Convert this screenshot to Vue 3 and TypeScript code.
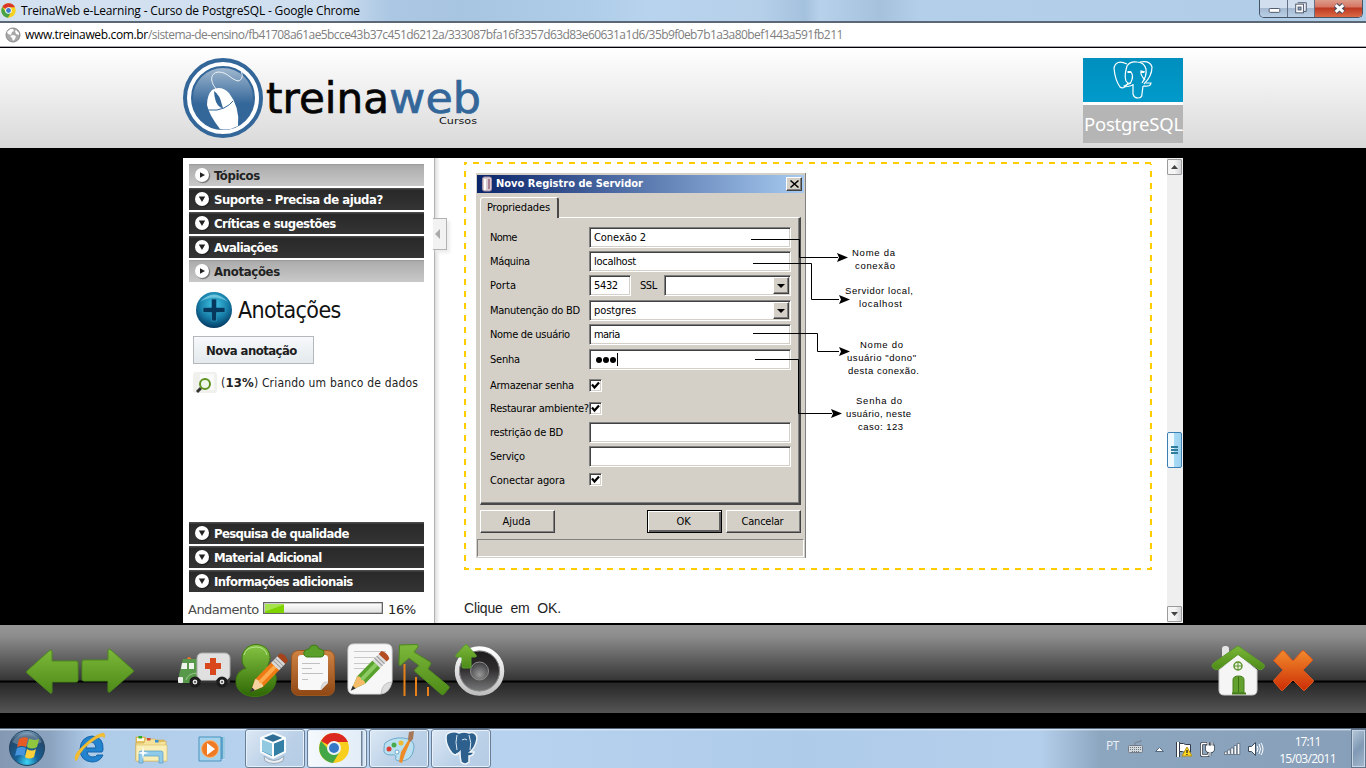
<script setup lang="ts">
import type { Directive } from 'vue'

// Spaces the letters of a label so that it fills exactly the given width.
const vFit: Directive<HTMLElement, number> = {
  mounted(el, binding) {
    const range = document.createRange()
    range.selectNodeContents(el)
    const natural = range.getBoundingClientRect().width
    const count = (el.textContent ?? '').length
    if (count > 1) el.style.letterSpacing = `${(binding.value - natural) / (count - 0.5)}px`
  },
}

interface Item { label: string; width: number; open?: boolean }

const topItems: Item[] = [
  { label: 'Tópicos', width: 46, open: true },
  { label: 'Suporte - Precisa de ajuda?', width: 169 },
  { label: 'Críticas e sugestões', width: 122 },
  { label: 'Avaliações', width: 64 },
  { label: 'Anotações', width: 66, open: true },
]
const bottomItems: Item[] = [
  { label: 'Pesquisa de qualidade', width: 135 },
  { label: 'Material Adicional', width: 108 },
  { label: 'Informações adicionais', width: 139 },
]

interface Row { label: string; width: number; kind: 'text' | 'port' | 'combo' | 'secret' | 'check'; value?: string; valueWidth?: number }

const rows: Row[] = [
  { label: 'Nome', width: 27, kind: 'text', value: 'Conexão 2', valueWidth: 52 },
  { label: 'Máquina', width: 40, kind: 'text', value: 'localhost', valueWidth: 42 },
  { label: 'Porta', width: 26, kind: 'port', value: '5432', valueWidth: 24 },
  { label: 'Manutenção do BD', width: 90, kind: 'combo', value: 'postgres', valueWidth: 42 },
  { label: 'Nome de usuário', width: 80, kind: 'text', value: 'maria', valueWidth: 26 },
  { label: 'Senha', width: 30, kind: 'secret' },
  { label: 'Armazenar senha', width: 84, kind: 'check' },
  { label: 'Restaurar ambiente?', width: 99, kind: 'check' },
  { label: 'restrição de BD', width: 73, kind: 'text', value: '', valueWidth: 0 },
  { label: 'Serviço', width: 35, kind: 'text', value: '', valueWidth: 0 },
  { label: 'Conectar agora', width: 75, kind: 'check' },
]
</script>

<template>
  <div class="screen">
    <header class="titlebar">
      <svg class="chrome-small" viewBox="0 0 46 46">
        <circle cx="23" cy="23" r="22" fill="#f4d21f" />
        <path d="M23 23 4 12A22 22 0 0 1 43 13L23 13Z" fill="#d8372a" />
        <path d="M4 12A22 22 0 0 0 21 45L31 28 14 27Z" fill="#45a248" />
        <circle cx="23" cy="23" r="10" fill="#fff" /><circle cx="23" cy="23" r="7.5" fill="#3f7fd0" />
      </svg>
      <span v-fit="339" class="title-text">TreinaWeb e-Learning - Curso de PostgreSQL - Google Chrome</span>
      <div class="win-buttons">
        <span class="wb"><svg viewBox="0 0 28 17"><rect x="9.5" y="8.5" width="11" height="4" rx="1" fill="#fff" stroke="#4c566a" /></svg></span>
        <span class="wb mid"><svg viewBox="0 0 27 17"><path d="M10 2.500h9v9h-3" fill="#e8edf4" stroke="#4c566a" /><rect x="8" y="4" width="8" height="9" fill="#fff" stroke="#4c566a" /><rect x="10.500" y="7" width="3" height="3" fill="#8fa8c8" stroke="#4c566a" /></svg></span>
        <span class="wb close"><svg viewBox="0 0 46 17"><path d="m20 5 8 7m0-7-8 7" stroke="#444c5e" stroke-width="5" /><path d="m20.200 5.200 7.600 6.600m0-6.600-7.600 6.600" stroke="#fff" stroke-width="3" /></svg></span>
      </div>
    </header>

    <div class="address">
      <svg class="globe" viewBox="0 0 16 16">
        <circle cx="8" cy="8" r="7" fill="#a8a8a8" stroke="#8a8a8a" />
        <path d="M3 4q3-3 5-2l1 2-2 1-1 3-3-1-1-2Zm5 4 3 1-1 3-2 2-1-3-2-2Zm3-5 3 3v2l-3-1-1-3Z" fill="#fff" />
      </svg>
      <span v-fit="123" class="host">www.treinaweb.com.br</span><span v-fit="695" class="path">/sistema-de-ensino/fb41708a61ae5bcce43b37c451d6212a/333087bfa16f3357d63d83e60631a1d6/35b9f0eb7b1a3a80bef1443a591fb211</span>
    </div>

    <div class="site-head">
      <div class="column head-row">
        <svg class="logo" width="300" height="82" viewBox="183 57 300 82">
          <defs>
            <linearGradient id="disc" x1="0" y1="0" x2="0" y2="1"><stop offset="0" stop-color="#a3bad0" /><stop offset=".6" stop-color="#336699" /></linearGradient>
          </defs>
          <circle cx="223" cy="98" r="38" fill="#fff" stroke="#336699" stroke-width="4" />
          <circle cx="223" cy="98" r="31" fill="url(#disc)" stroke="#336699" stroke-width="2" />
          <path d="M216 89C209 80 211 73 218 72 228 72 230 79 238 81 243 80 243 74 241 72" fill="none" stroke="#eef3f8" stroke-width="1" />
          <path d="M212 90Q221 85 229 93 240 107 238 126 229 131 220 129 209 115 207 105 207 95 212 90Z" fill="#fff" />
          <path d="M208 110Q218 111 224 108 230 105 233 101" fill="none" stroke="#336699" />
          <path d="M214 91q6 4 8 14l1 3q-4 0-7-6-2-6-2-11Z" fill="#336699" />
          <text x="266" y="112.500" font-family="'DejaVu Sans',sans-serif" font-size="43" textLength="123" lengthAdjust="spacingAndGlyphs" fill="#050505" stroke="#050505" stroke-width=".7">treina</text>
          <text x="389" y="112.500" font-family="'DejaVu Sans',sans-serif" font-size="43" textLength="92" lengthAdjust="spacingAndGlyphs" fill="#336699" stroke="#336699" stroke-width=".7">web</text>
          <text x="439" y="124" font-family="'DejaVu Sans',sans-serif" font-size="9.500" textLength="38" lengthAdjust="spacingAndGlyphs" fill="#111">Cursos</text>
        </svg>
        <div class="pg">
          <div class="pg-blue">
            <svg width="42" height="42" viewBox="83 59 42 42" fill="none" stroke="#fff" stroke-width="1.200">
              <path d="M97 64Q86 59 84 68 85 80 90 87 94 90 98 83" />
              <path d="M97 66Q94 76 96 81 99 85 101 82 104 76 101 72L97 72" />
              <path d="M97 66Q100 61 107 62 114 62 116 69 117 76 112 83" />
              <path d="M103 84V94Q104 98 108 98 112 98 112 94L113 86" />
              <path d="M110 62Q120 60 122 67 122 76 114 84" />
              <path d="M115 80Q110 75 111 71L115 72M113 86Q121 87 121 83L116 83M103 85Q95 88 94 86L101 83" />
              <path d="M98 72h3M111 72h3" stroke-width="2.200" />
            </svg>
          </div>
          <div class="pg-name"><span v-fit="99">PostgreSQL</span></div>
        </div>
      </div>
    </div>

    <main class="stage">
      <div class="column body-row">
        <aside class="side">
          <div v-for="it in topItems" :key="it.label" class="item" :class="{ light: it.open }">
            <span class="disc"><svg viewBox="0 0 14 14"><path v-if="it.open" d="M5 4.200 10 7 5 9.800Z" /><path v-else d="M3.800 4.500h6.400L7 10Z" /></svg></span>
            <span v-fit="it.width">{{ it.label }}</span>
          </div>
          <div class="notes-head">
            <svg width="38" height="38" viewBox="0 0 38 38">
              <defs><radialGradient id="orb" cx=".5" cy=".35" r=".65"><stop offset="0" stop-color="#43c6e6" /><stop offset=".6" stop-color="#167ea8" /><stop offset="1" stop-color="#043a63" /></radialGradient></defs>
              <circle cx="19" cy="19" r="18" fill="url(#orb)" />
              <path d="M5 11Q19-4 33 11 19 2 5 11" fill="#9de3f2" opacity=".6" />
              <path d="M16.500 8h5v8.500H30v5h-8.500V30h-5v-8.500H8v-5h8.500Z" fill="#06375c" stroke="#2993ba" stroke-width=".8" />
            </svg>
            <span v-fit="103">Anotações</span>
          </div>
          <div class="new-note"><span v-fit="91">Nova anotação</span></div>
          <div class="note">
            <svg width="24" height="24" viewBox="0 0 24 24"><rect x="0" y="1" width="24" height="21" rx="3" fill="#f0f0ec" /><rect x="7" y="3" width="14" height="16" fill="#fafafa" /><path d="m8 17-4 4" stroke="#333" stroke-width="3" /><circle cx="12" cy="13" r="5" fill="#eff7eb" stroke="#5f9420" stroke-width="2" /></svg>
            <span v-fit="197" class="note-text">(<b>13%</b>) Criando um banco de dados</span>
          </div>
          <div class="spacer"></div>
          <div v-for="it in bottomItems" :key="it.label" class="item">
            <span class="disc"><svg viewBox="0 0 14 14"><path d="M3.800 4.500h6.400L7 10Z" /></svg></span>
            <span v-fit="it.width">{{ it.label }}</span>
          </div>
          <div class="progress">
            <span v-fit="71" class="p-label">Andamento</span>
            <span class="track"><span class="bar"></span></span>
            <span v-fit="28" class="p-value">16%</span>
          </div>
          <div class="handle"><svg width="5" height="10" viewBox="0 0 5 10"><path d="M5 0v10L0 5Z" fill="#aaa" /></svg></div>
        </aside>

        <section class="lesson">
          <div class="dashed">
            <div class="dialog">
              <div class="d-title">
                <svg width="10" height="16" viewBox="0 0 10 16"><rect x=".5" y="1" width="9" height="14" rx="2" fill="#d9c9d3" stroke="#a892a4" /><path d="M3 3v11" stroke="#fff" stroke-width="2" /><path d="M7 3v10" stroke="#aa7d91" stroke-width="2" /></svg>
                <span v-fit="147">Novo Registro de Servidor</span>
                <span class="d-close"><svg width="9" height="8" viewBox="0 0 9 8"><path d="m.5.500 8 7m0-7-8 7" stroke="#000" stroke-width="1.600" /></svg></span>
              </div>
              <div class="tab"><span v-fit="63">Propriedades</span></div>
              <div class="pane">
                <div v-for="r in rows" :key="r.label" class="row">
                  <span class="lab"><span v-fit="r.width">{{ r.label }}</span></span>
                  <span v-if="r.kind === 'check'" class="check"><svg width="9" height="9" viewBox="0 0 9 9"><path d="m1 3.500 2.500 3L8 1.500" fill="none" stroke="#000" stroke-width="2.200" /></svg></span>
                  <template v-else-if="r.kind === 'port'">
                    <span class="field short"><span v-fit="24">{{ r.value }}</span></span>
                    <span class="ssl"><span v-fit="17">SSL</span></span>
                    <span class="field ssl-combo"><i class="drop"></i></span>
                  </template>
                  <span v-else-if="r.kind === 'secret'" class="field dots"><i></i><i></i><i></i><b></b></span>
                  <span v-else class="field"><span v-if="r.value" v-fit="r.valueWidth ?? 0">{{ r.value }}</span><i v-if="r.kind === 'combo'" class="drop"></i></span>
                </div>
              </div>
              <div class="d-buttons">
                <span class="btn"><span v-fit="28">Ajuda</span></span>
                <span class="btn default"><span v-fit="14">OK</span></span>
                <span class="btn"><span v-fit="42">Cancelar</span></span>
              </div>
              <div class="status"></div>
            </div>
            <svg class="callouts" width="200" height="210" viewBox="740 225 200 210">
              <g fill="none" stroke="#000">
                <path d="M751 239.500h48.500v18H838" />
                <path d="M753 263.500h58.500v36H839" />
                <path d="M753 333.500h64.500v18H839" />
                <path d="M755 359.500h43.500v54H832" />
              </g>
              <path d="m848 257.500-11-4.500 2 4.500-2 4.500Zm2 42-11-4.500 2 4.500-2 4.500Zm0 52-11-4.500 2 4.500-2 4.500Zm-8 62-11-4.500 2 4.500-2 4.500Z" />
              <g class="call-text">
                <text x="852" y="256" textLength="43">Nome da</text><text x="855" y="269" textLength="40">conexão</text>
                <text x="845" y="294" textLength="68">Servidor local,</text><text x="859" y="307" textLength="43">localhost</text>
                <text x="860" y="348" textLength="43">Nome do</text><text x="847" y="361" textLength="69">usuário "dono"</text><text x="848" y="374" textLength="71">desta conexão.</text>
                <text x="856" y="404" textLength="46">Senha do</text><text x="846" y="417" textLength="65">usuário, neste</text><text x="858" y="430" textLength="45">caso: 123</text>
              </g>
            </svg>
          </div>
          <p class="after"><span v-fit="97">Clique em OK.</span></p>
        </section>

        <div class="scroll">
          <span class="s-btn"><svg width="7" height="4" viewBox="0 0 7 4"><path d="M0 4 3.500 0 7 4Z" fill="#444" /></svg></span>
          <span class="thumb"><i></i><i></i><i></i></span>
          <span class="s-btn"><svg width="7" height="4" viewBox="0 0 7 4"><path d="M0 0h7L3.500 4Z" fill="#444" /></svg></span>
        </div>
      </div>
    </main>

    <nav class="toolbar">
      <svg width="0" height="0" class="defs">
        <defs>
          <linearGradient id="green" x1="0" y1="0" x2="0" y2="1"><stop offset="0" stop-color="#7cb83a" /><stop offset="1" stop-color="#4d8a17" /></linearGradient>
          <linearGradient id="deep" x1="0" y1="0" x2="0" y2="1"><stop offset="0" stop-color="#86c544" /><stop offset="1" stop-color="#2e6704" /></linearGradient>
          <linearGradient id="brown" x1="0" y1="0" x2="0" y2="1"><stop offset="0" stop-color="#cf8444" /><stop offset="1" stop-color="#8f4714" /></linearGradient>
          <linearGradient id="fire" x1="0" y1="0" x2="0" y2="1"><stop offset="0" stop-color="#f28a2c" /><stop offset="1" stop-color="#cc2e05" /></linearGradient>
          <linearGradient id="ring" x1="0" y1="0" x2="0" y2="1"><stop offset="0" stop-color="#fff" /><stop offset="1" stop-color="#bfbfbf" /></linearGradient>
          <linearGradient id="cone" x1="0" y1="0" x2="0" y2="1"><stop offset="0" stop-color="#1c191b" /><stop offset=".45" stop-color="#2e2b2d" /><stop offset="1" stop-color="#7e8081" /></linearGradient>
          <radialGradient id="cap" cx=".5" cy=".7" r=".7"><stop offset="0" stop-color="#999" /><stop offset="1" stop-color="#3a3a3c" /></radialGradient>
        </defs>
      </svg>
      <svg class="tool" viewBox="24 640 56 60"><path d="M27 671 49 651q3-2 3 1v9h24q2 0 2 2v17q0 2-2 2H52v9q0 4-3 1L27 673q-1-1 0-2Z" fill="url(#green)" stroke="#4d8a1c" /></svg>
      <svg class="tool" viewBox="80 640 56 60"><path d="M133 670 111 650q-3-2-3 1v9H84q-2 0-2 2v17q0 2 2 2h24v9q0 4 3 1l22-19q1-1 0-2Z" fill="url(#green)" stroke="#4d8a1c" /></svg>
      <svg class="tool gap" viewBox="176 640 56 60">
        <path d="M187 660q0-3 2-3t3 3Z" fill="#ef702b" />
        <path d="M183 659h15v24h-18q-2-6 0-12Z" fill="#58984a" /><path d="M182 663h5v6h-6Zm7 0h5v6h-5Z" fill="#eef5ec" /><path d="M186 680q2-7 12-7" fill="none" stroke="#9aca8e" />
        <rect x="197" y="653" width="33" height="27" rx="5" fill="#e0e0e0" stroke="#aaa" /><rect x="178" y="677" width="5" height="6" rx="1" fill="#eee" /><path d="M196 680h34v3h-34Z" fill="#333" /><path d="M201 679.500h15" stroke="#ddd" stroke-width="2" />
        <path d="M210 658h6v5h5v6h-5v6h-6v-6h-5v-6h5Z" fill="#d9481c" />
        <g fill="#e5e5e5" stroke="#1c1c1c" stroke-width="3.200"><circle cx="195" cy="682" r="4" /><circle cx="222" cy="682" r="4" /></g><g fill="#444"><circle cx="195" cy="682" r="1" /><circle cx="222" cy="682" r="1" /></g>
      </svg>
      <svg class="tool" viewBox="232 640 56 60">
        <path d="M256 644.500c8 0 14 5 14 13 0 5-3 7-2 10 7 3 9 8 8 14-2 10-11 15-21 15-11 0-19-6-19-15 0-7 4-12 10-13-3-3-4-6-4-10 0-8 6-14 14-14Z" fill="url(#deep)" stroke="#3d7910" />
        <path d="M244 655q2-8 12-8 9 0 11 8" fill="none" stroke="#b7e28c" />
        <g transform="rotate(44 264 678)"><path d="M258.500 661h11v24l-5.500 12-5.500-12Z" fill="#ef7a13" /><path d="M262 661h4v24h-4Z" fill="#ffa94d" /><path d="M258.500 685q3-3 5.500 0 3-3 5.500 0L264 697Z" fill="#f5d3a0" /><path d="m262 693 2 5 2-5Z" fill="#333" /><rect x="258.500" y="653" width="11" height="9" fill="#d8d8d8" /><path d="M258.500 656h11m-11 3h11" stroke="#999" /><path d="M258.500 653v-4q5.500-3 11 0v4Z" fill="#a5441b" /></g>
      </svg>
      <svg class="tool" viewBox="288 640 56 60">
        <rect x="291.500" y="650.500" width="43" height="45" rx="7" fill="url(#brown)" stroke="#9c571f" />
        <path d="M301 655h24q3 0 3 3v25l-7 7h-20q-3 0-3-3v-29q0-3 3-3Z" fill="#f8f8f8" /><path d="M328 682q-7-1-7 8" fill="#ddd" stroke="#bbb" stroke-width=".7" />
        <path d="M302 663.500h18m-18 5h10m-10 5h21m-21 6h6" stroke="#c0c0c0" />
        <path d="M307 657q-4-1-3-5 1-3 5-3 1-4 5-4t5 4q5 0 5 4 0 4-3 4Z" fill="#599f2a" stroke="#3f7b15" />
      </svg>
      <svg class="tool" viewBox="344 640 56 60">
        <path d="M354 644h32q6 0 6 6v32q-4 12-12 12h-26q-6 0-6-6v-38q0-6 6-6Z" fill="#f7f7f7" stroke="#ddd" /><path d="M392 682q-10 0-11 12 9-1 11-12Z" fill="#ddd" stroke="#aaa" stroke-width=".6" />
        <path d="M354 651.500h32m-32 6h29m-29 6h16m-16 5h12" stroke="#c9c9c9" />
        <g transform="rotate(44 366 675)"><path d="M360.500 660h11v22l-5.500 14-5.500-14Z" fill="#58a12c" /><path d="M364 660h4v22h-4Z" fill="#8ccb63" /><path d="M360.500 682q3-3 5.500 0 3-3 5.500 0L366 696Z" fill="#f7bc69" /><path d="m364 692 2 5 2-5Z" fill="#333" /><rect x="360.500" y="651" width="11" height="9" fill="#ddd" /><path d="M360.500 654h11m-11 3h11" stroke="#999" /><path d="M360.500 651v-4q5.500-3 11 0v4Z" fill="#b34d20" /></g>
      </svg>
      <svg class="tool" viewBox="400 640 56 60">
        <path d="M404.500 664v32m11.500-19v19m12-9v9" stroke="#e9811b" stroke-width="2" />
        <path d="M399.500 645 417 644.500Q418.500 645 418 647L414 652 430 662Q431.500 663 430.500 664.500L428 669 448.500 686Q449.500 687 449 688L443.500 694.500Q442.500 695 441.500 694.500L415 671.500Q414 670 415.500 669L419 665.500 409 658 400.500 665.500Q399 666 399 664Z" fill="url(#green)" stroke="#4d8a1c" />
      </svg>
      <svg class="tool" viewBox="456 640 56 60">
        <circle cx="479.500" cy="671" r="22.500" fill="url(#cone)" stroke="url(#ring)" stroke-width="4.500" /><circle cx="479.500" cy="671" r="20" fill="none" stroke="#8a8a8a" /><circle cx="479.500" cy="671" r="9" fill="url(#cap)" stroke="#8e8e8e" />
        <path d="m456 655 9-10q1-1 2 0l9 10q1 2-1 2h-4v10q0 1-1 1h-7q-1 0-1-1v-10h-5q-2 0-1-2Z" fill="url(#green)" stroke="#599f2a" />
      </svg>
      <span class="grow"></span>
      <svg class="tool" viewBox="1210 640 56 60">
        <rect x="1222" y="646" width="7" height="14" rx="3" fill="#e5e5e5" /><path d="m1238 654 19 16v20q0 5-5 5h-28q-5 0-5-5v-20Z" fill="#f5f5f5" stroke="#ccc" />
        <path d="M1237 646.500q1-.8 2 0l25 18q1 1 0 3-2 3-5 2l-21-15-20 15q-4 1-6-3 0-2 1-3Z" fill="url(#green)" stroke="#5b9a29" />
        <circle cx="1238" cy="666" r="4" fill="#eaf1e2" stroke="#5c942c" stroke-width="1.500" /><path d="M1238 662v8m-4-4h8" stroke="#5c942c" />
        <path d="M1233 693v-13q0-4 5.500-4t5.500 4v13Z" fill="#62a12e" stroke="#477e1b" /><path d="M1238.500 677v15" stroke="#3b7013" /><path d="M1232 693.500h14" stroke="#477e1b" stroke-width="2" />
      </svg>
      <svg class="tool" viewBox="1266 640 56 60"><path d="m1274 660 8-9q1-1 2 0l9 10 9-10q1-1 2 0l8 8q1 1 0 2l-9 9 10 10q1 1 0 2l-8 8q-1 1-2 0l-10-10-10 10q-1 1-2 0l-7-8q-1-1 0-2l9-10-9-9q-1 0 0-1Z" fill="url(#fire)" stroke="#d8551e" /></svg>
    </nav>

    <footer class="taskbar">
      <svg class="task-ico" viewBox="9 730 36 36">
        <defs><radialGradient id="start" cx=".5" cy=".9" r=".9"><stop offset="0" stop-color="#3fd6f7" /><stop offset=".35" stop-color="#166198" /><stop offset=".8" stop-color="#234769" /><stop offset="1" stop-color="#7ea5c4" /></radialGradient></defs>
        <circle cx="27" cy="748" r="17.500" fill="url(#start)" stroke="#24435f" />
        <path d="M12 742q15-19 30 0-15 8-30 0" fill="#fff" opacity=".25" />
        <path d="M19 739q5-3 9-1l-2 9q-4-2-9 0Z" fill="#e75b24" /><path d="m29 739 1 0q5 2 9 0l-2 8q-5 3-10 0Z" fill="#8fc73e" /><path d="M17 748q5-2 9 0l-2 8q-5-2-9 0Z" fill="#4794de" /><path d="M27 749q5 3 9 0l-2 8q-5 3-9 0Z" fill="#fcd13c" />
      </svg>
      <svg class="task-ico ie" viewBox="72 730 36 36">
        <path d="M102 752h-15q1 5 6 5 3 0 4-2h6q-3 7-11 7-12-1-12-13 1-12 12-13 12 1 11 14Zm-6-4q-1-6-5-6t-5 6Z" fill="#2383cf" stroke="#1464aa" />
        <path d="M76 761q-4-5 7-15 11-11 20-13 3 1 1 5 0-4-8 1-15 9-19 21" fill="#f5bf30" stroke="#e9b025" stroke-width=".5" />
      </svg>
      <svg class="task-ico folder" viewBox="133 730 36 36">
        <path d="M136 737h9l2 3h17v20h-28Z" fill="#e6c660" stroke="#cfab4c" stroke-width=".7" /><path d="M137 738h7v3h-7Z" fill="#fbf8e8" /><path d="M138.500 736h3.500v2.500h-3.500Z" fill="#2fae2b" /><path d="m145 739 10 0 2 3 9-1v20h-30v-18h8Z" fill="#f5e39b" stroke="#d0ae50" stroke-width=".7" /><path d="M147 738h3.500v2.500H147Z" fill="#d04a36" /><path d="M155 740h3.500v2.500H155Z" fill="#3690d4" />
        <path d="M136 745h31v16h-31Z" fill="#f8eeb6" stroke="#d8bb62" stroke-width=".6" /><path d="M139 753q0-2 2-2h20q2 0 2 2v10h-4v-7h-16v7h-4Z" fill="#8ecbea" stroke="#5b9cc4" stroke-width=".7" /><path d="m143 746 1 6 5 1-5 1-1 6-1-6-5-1 5-1Z" fill="#fff" />
      </svg>
      <svg class="task-ico media" viewBox="195 730 36 36">
        <path d="M207 737h18v22h-18Z" fill="#60a7cd" /><path d="M199 737h22v24h-22Z" fill="#a5d2ec" stroke="#4a93be" /><path d="M224 737v23" stroke="#d8edf8" /><circle cx="210" cy="749" r="8.500" fill="#f07b25" stroke="#f9b778" /><path d="m207 743 8 6-8 6Z" fill="#fff" />
      </svg>
      <span class="task first">
        <svg viewBox="255 731 40 36"><path d="M264 756q10 9 20 0l-1 5q-9 5-18 0Z" fill="#e8edf3" stroke="#9babb9" /><path d="m273 733 12 5v14l-12 6-12-6v-14Z" fill="#347fa5" stroke="#f5fafc" stroke-width="2" /><path d="m273 735 10 3.500-10 4-10-4Z" fill="#306d95" /><path d="M262 739v12l11 5v-12Z" fill="#91c9e0" /><path d="m261 738 12 5 12-5m-12 5v15" fill="none" stroke="#fff" stroke-width="2" /></svg>
      </span>
      <span class="task active">
        <svg viewBox="314 731 40 36"><circle cx="334" cy="748" r="15" fill="#f8ce1f" /><path d="M334 748 321 741A15 15 0 0 1 348 742L334 742Z" fill="#dc2920" /><path d="M321 741A15 15 0 0 0 333 763L340 751 329 750Z" fill="#43a747" /><circle cx="334" cy="748" r="7" fill="#eef4f6" /><circle cx="334" cy="748" r="5" fill="#3678c8" /></svg>
      </span>
      <span class="task">
        <svg viewBox="379 731 40 36"><path d="M385 743q8-6 18-5 12 1 11 10-2 14-15 13-5-1-3-4 0-3-5-2-8 0-7-6 0-4 1-6Z" fill="#b9e0f1" stroke="#6da7c8" /><circle cx="389" cy="749" r="2.500" fill="#dc3e34" /><circle cx="394" cy="745" r="2.500" fill="#48aa4d" /><circle cx="401" cy="743" r="2.500" fill="#edba31" /><circle cx="397" cy="752" r="2" fill="#fff" stroke="#6da7c8" /><path d="m399 762 2-10 8-13 2 1-6 14-3 9Z" fill="#ed8b28" /><path d="m408 739 1-7 5-1-1 8-3 3Z" fill="#a67857" /></svg>
      </span>
      <span class="task">
        <svg viewBox="441 731 40 36"><path d="M447 734q6-4 12-1 5-2 10 0 7-2 8 5-1 9-7 14l4 0q-1 4-5 4v6q-4 4-8 0-1-4-1-10-4 5-8 1-6-7-6-15 0-3 1-4Z" fill="#2d608c" stroke="#eff5f9" stroke-width="1.500" /><path d="M457 735q-2 7 0 15m12-15q3 8 1 15m-10 2-4 2m6-14q3-2 5 0" fill="none" stroke="#dce8f2" /></svg>
      </span>
      <span class="grow"></span>
      <div class="tray">
        <span v-fit="13" class="lang">PT</span>
        <svg width="140" height="24" viewBox="1124 737 140 24">
          <rect x="1128.500" y="745.500" width="14" height="7" rx="1" fill="#d4d9dd" stroke="#747d87" /><path d="M1130 747.500h11m-11 2h11m-9 2h7" stroke="#70777e" stroke-dasharray="1 1" /><path d="M1135 745q-1-3 3-3 4 0 3-2" fill="none" stroke="#747d87" />
          <path d="m1155.500 751.500 4-4 4 4Z" fill="#fff" stroke="#556981" />
          <path d="M1178 742v15" stroke="#333c46" stroke-width="4" /><path d="M1178 742v15" stroke="#fff" stroke-width="2" /><path d="M1179.500 743.500h4l2 1h5v8h-6l-2-1h-3Z" fill="#fff" stroke="#333c46" /><path d="m1187 747-5 9h10Z" fill="#ffda20" stroke="#b58e1b" /><path d="M1187 750v3m0 1v1" stroke="#222" stroke-width="1.300" />
          <rect x="1201.500" y="743.500" width="7" height="12" rx="1" fill="#8ba3bb" stroke="#323c48" stroke-width="3" /><rect x="1201.500" y="743.500" width="7" height="12" rx="1" fill="none" stroke="#fff" stroke-width="1.400" /><path d="M1206.500 746h7v4q-1 2-3.500 2t-3.500-2Zm1.500 0v-4m4 4v-4m-2 10v4" fill="#fff" stroke="#323c48" stroke-width="2.600" /><path d="M1206.500 746h7v4q-1 2-3.500 2t-3.500-2Zm1.500 0v-4m4 4v-4m-2 10v4" fill="#fff" stroke="#fff" stroke-width="1.200" />
          <g fill="#fff" stroke="#3c4b5d" stroke-width=".6"><path d="M1224.500 752h2.500v2.500h-2.500Z" /><path d="M1227.700 750h2.500v4.500h-2.500Z" /><path d="M1230.900 748h2.500v6.500h-2.500Z" /><path d="M1234.100 745.500h2.500v9h-2.500Z" /><path d="M1237.300 743.500h2.500v11h-2.500Z" /></g>
          <path d="M1248.500 746.500h3l4-4v13l-4-4h-3Z" fill="#fff" stroke="#3c4b5d" /><path d="M1257 746q2 3 0 6m2-8q3 5 0 10m2-11q4 6 0 12" fill="none" stroke="#fff" />
        </svg>
        <div class="clock"><span v-fit="26">17:11</span><span v-fit="57">15/03/2011</span></div>
        <span class="peek"></span>
      </div>
    </footer>
  </div>
</template>

<style>
body { overflow: hidden; }
</style>

<style scoped>
.screen { width: 1366px; height: 768px; display: flex; flex-direction: column; background: #000; overflow: hidden; color: #111; --tahoma: 'DejaVu Sans Condensed', 'DejaVu Sans', sans-serif; --segoe: 'Open Sans', 'Noto Sans', sans-serif; }
.screen * { box-sizing: border-box; }
.screen span { white-space: nowrap; }
svg { display: block; overflow: visible; flex: none; }
.grow { flex: 1; }
.titlebar { height: 23px; display: flex; align-items: flex-start; padding-left: 1px; background: linear-gradient(90deg, #d4e1f0 0, #cfdff0 330px, #abc7e3 390px, #a7c4e1 460px, #afcde9 590px, #b8d3ed 650px, #b6d0ea 760px, #a4c1dd 805px, #b7d1eb 820px, #a5c1dc 880px, #b3cfe9 920px, #b0cde8 1366px); border-bottom: 2px solid #5b6775; }
.chrome-small { width: 15px; height: 15px; margin-top: 3px; }
.title-text { font: 12px/22px var(--segoe); margin-left: 5px; color: #000; flex: 1; }
.win-buttons { display: flex; height: 18px; margin-right: 3px; border: 1px solid #465466; border-top: 0; border-radius: 0 0 5px 5px; overflow: hidden; }
.wb { display: block; width: 28px; background: linear-gradient(#d0deed 0 8px, #a4b9d0 8px, #bad0e7); border-right: 1px solid #617084; }
.wb.mid { width: 27px; }
.wb.close { width: 47px; border: 0; background: linear-gradient(#dc9c8b 0, #d77563 7px, #bb3721 8px, #dc6a45); }
.wb svg { height: 17px; width: 100%; }
.address { height: 25px; display: flex; align-items: center; background: #fff; border-bottom: 1px solid #000; box-shadow: inset 0 -1px #a9abb7; padding: 0 0 0 5px; font: 12px/22px var(--segoe); }
.globe { width: 16px; height: 16px; margin-right: 4px; }
.host { width: 123px; color: #000; }
.path { color: #808080; }
.site-head { height: 100px; background: linear-gradient(#fff, #d9d9d9); }
.column { width: 1000px; margin: 0 auto; }
.head-row { display: flex; justify-content: space-between; padding-top: 9px; }
.pg { width: 100px; height: 85px; margin-top: 1px; background: #fff; display: flex; flex-direction: column; gap: 3px; }
.pg-blue { height: 44px; background: linear-gradient(#008fbe, #009aca); padding: 1px 0 0 30px; }
.pg-name { height: 38px; background: #b5b5b5; color: #fff; font: 18.500px/38px 'Noto Sans', sans-serif; padding-left: 1px; }
.stage { height: 477px; padding-top: 10px; background: #000; }
.body-row { height: 465px; background: #fff; display: flex; }
.side { width: 252px; position: relative; border-right: 1px solid #b2b2b2; padding: 6px 0 0 6px; display: flex; flex-direction: column; font-family: var(--tahoma); }
.item { width: 235px; height: 22px; margin-bottom: 2px; display: flex; align-items: center; gap: 5px; padding-left: 6px; flex: none; background: linear-gradient(#4b4b4b 0 1px, #292929 2px, #343434); color: #fff; font-size: 13px; font-weight: bold; line-height: 21px; }
.item.light { background: linear-gradient(#989898 0, #adadad 2px, #c9c9c9); color: #222; }
.disc { width: 14px; height: 14px; border-radius: 50%; background: #fff; box-shadow: 1px 1px 1px #0007; }
.disc svg { width: 14px; height: 14px; fill: #222; }
.notes-head { display: flex; align-items: center; gap: 5px; padding: 2px 0 0 6px; height: 50px; font-size: 23px; line-height: 40px; }
.new-note { width: 121px; height: 28px; margin: 2px 0 0 4px; border: 1px solid #b4b8ba; background: linear-gradient(#f7f9fa, #e3e9ed); padding-left: 12px; font-size: 13px; font-weight: bold; line-height: 27px; flex: none; color: #1d1d1d; }
.note { display: flex; align-items: center; gap: 4px; margin: 6px 0 0 4px; height: 26px; color: #222; }
.note-text { font-size: 12px; line-height: 20px; }
.note-text b { font-size: 13px; }
.spacer { flex: 1; }
.progress { height: 29px; display: flex; align-items: center; margin-left: -1px; font: 13px/20px 'DejaVu Sans', sans-serif; color: #4b4b4b; flex: none; padding-top: 2px; }
.p-label { width: 75px; }
.track { width: 120px; height: 12px; border: 1px solid #666; background: linear-gradient(#fff, #e0e0e0); box-shadow: inset 0 0 0 .5px #999; margin-right: 5px; margin-bottom: 3px; padding: 1px; }
.bar { display: block; width: 19px; height: 9px; background: linear-gradient(160deg, #a6e24c 0 45%, #7ed300 50%); }
.p-value { color: #222; }
.handle { position: absolute; left: 250px; top: 60px; width: 14px; height: 32px; background: #f2f2f2; border: 1px solid #b2b2b2; border-left: 0; box-shadow: 3px 3px 3px #eee; display: flex; align-items: center; padding-left: 2px; z-index: 2; }
.lesson { width: 732px; padding: 4px 0 0 29px; font-family: var(--tahoma); background: linear-gradient(90deg, #dedede, #fff 5px); }
.dashed { width: 688px; height: 408px; position: relative; padding: 11px 0 0 12px; background: repeating-linear-gradient(90deg, #fc0 0 3px, #fff 3px 9px, #fc0 9px 12px) 0 0 / 100% 2px no-repeat, repeating-linear-gradient(90deg, #fc0 0 5px, #fff 5px 11px, #fc0 11px 12px) 0 100% / 100% 2px no-repeat, repeating-linear-gradient(#fc0 0 3px, #fff 3px 9px, #fc0 9px 12px) 0 0 / 2px 100% no-repeat, repeating-linear-gradient(#fc0 0 3px, #fff 3px 9px, #fc0 9px 12px) 100% 0 / 2px 100% no-repeat; }
.dialog { width: 330px; height: 385px; background: #d4d0c8; border-right: 1px solid #808080; padding: 2px 0 0 1px; font-size: 11px; color: #000; }
.d-title { width: 327px; height: 18px; display: flex; align-items: center; background: linear-gradient(90deg, #0a246a, #a6caf0); padding: 0 2px 0 5px; color: #fff; font-weight: bold; line-height: 18px; }
.d-title > span:nth-child(2) { flex: 1; margin-left: 4px; }
.d-close { width: 16px; height: 14px; display: flex; align-items: center; justify-content: center; background: #d4d0c8; border: 1px solid; border-color: #fff #404040 #404040 #fff; box-shadow: inset -1px -1px #808080; }
.tab { width: 79px; height: 21px; margin: 4px 0 0 3px; border: 1px solid #fff; border-bottom: 0; border-right: 2px solid #484848; border-radius: 3px 3px 0 0; padding-left: 6px; line-height: 20px; position: relative; z-index: 1; background: #d4d0c8; }
.pane { width: 321px; height: 288px; margin: -1px 0 0 3px; border: 1px solid #fff; border-right: 2px solid #484848; border-bottom: 2px solid #484848; box-shadow: inset -1px -1px #808080; padding: 9px 0 0 9px; }
.row { height: 24px; display: flex; align-items: flex-start; line-height: 21px; }
.row:nth-child(3), .row:nth-child(5) { height: 25px; }
.row:nth-child(6) { height: 26px; }
.row:nth-child(7) { height: 23px; }
.row:nth-child(10) { height: 23px; }
.row:nth-child(11) .lab { padding-top: 1px; }
.lab { width: 99px; flex: none; }
.field { width: 202px; height: 21px; background: #fff; border: 1px solid; border-color: #808080 #fff #fff #808080; box-shadow: inset 1px 1px #404040, inset -1px -1px #d4d0c8; padding-left: 4px; line-height: 19px; display: flex; flex: none; }
.short { width: 42px; }
.ssl { width: 33px; padding-left: 9px; }
.ssl-combo { width: 127px; }
.drop { margin: 1px 1px 1px auto; width: 16px; height: 17px; background: #d4d0c8; border: 1px solid; border-color: #fff #404040 #404040 #fff; box-shadow: inset -1px -1px #808080; display: flex; align-items: center; justify-content: center; }
.drop::after { content: ''; border: 4px solid transparent; border-top-color: #000; border-bottom: 0; }
.dots { align-items: center; gap: 1px; }
.dots i { width: 6px; height: 6px; border-radius: 50%; background: #000; }
.dots i:first-child { margin-left: 2px; }
.dots b { width: 1px; height: 13px; background: #000; }
.check { width: 13px; height: 13px; margin-top: 4px; background: #fff; border: 1px solid; border-color: #808080 #fff #fff #808080; box-shadow: inset 1px 1px #404040, inset -1px -1px #d4d0c8; padding: 1px; }
.d-buttons { display: flex; gap: 4px; margin: 5px 0 0 3px; }
.btn { width: 75px; height: 23px; display: flex; justify-content: center; line-height: 21px; padding-right: 2px; border: 1px solid; border-color: #fff #404040 #404040 #fff; box-shadow: inset -1px -1px #808080; }
.btn:first-child { margin-right: 88px; }
.btn.default { border-color: #000; box-shadow: inset 1px 1px #fff, inset -2px -2px #606060; }
.status { width: 327px; height: 18px; margin-top: 6px; border: 1px solid; border-color: #808080 #fff #fff #808080; }
.callouts { position: absolute; left: 276px; top: 63px; }
.call-text { font: 9.500px 'Liberation Sans', Arial, sans-serif; fill: #000; }
.after { font: 14px/20px 'Liberation Sans', Arial, sans-serif; word-spacing: 4px; margin: 28px 0 0; color: #1e1e1e; }
.scroll { width: 16px; padding-top: 1px; background: #efefef; display: flex; flex-direction: column; }
.s-btn { width: 15px; height: 16px; display: flex; align-items: center; justify-content: center; background: linear-gradient(90deg, #f5f5f5 50%, #d3d5d8); border: 1px solid #9b9b9b; border-radius: 1px; }
.s-btn:last-child { margin-top: auto; margin-bottom: 1px; }
.thumb { width: 15px; height: 36px; margin-top: 257px; background: linear-gradient(90deg, #f0f9fd 45%, #a7daf5 50%, #9cd1ee); border: 1px solid #3c7fb1; border-radius: 2px; display: flex; flex-direction: column; align-items: center; justify-content: center; gap: 1px; }
.thumb i { width: 7px; height: 2px; background: #2f7d9d; }
.toolbar { height: 88px; display: flex; align-items: flex-start; padding: 15px 44px 0 24px; background: linear-gradient(#979797, #8b8b8b 12px, #363636 55px, #000 56px 57px, #272727 58px, #555 88px); }
.defs { position: absolute; }
.tool { width: 56px; height: 60px; }
.tool.gap { margin-left: 40px; }
.taskbar { height: 40px; margin-top: 15px; display: flex; align-items: flex-start; padding-left: 9px; border-top: 1px solid #52647a; background: linear-gradient(#e4eef8 0, #fff0 2px), linear-gradient(90deg, #8498b2 0, #8ba3bf 50px, #aecbe8 90px, #b5d1ee 240px, #b6d2ee 520px, #aecbea 800px, #b4cfeb 1040px, #8da6c0 1100px, #879fb8 1366px); }
.task-ico { width: 36px; height: 36px; margin-top: 1px; }
.ie { margin-left: 27px; }
.folder { margin-left: 25px; }
.media { margin-left: 26px; }
.task { width: 60px; height: 39px; margin: 0 2px 0 0; border: 1px solid #6a7e95; border-radius: 3px; background: linear-gradient(135deg, #dce8f4, #bad0e7 60%, #b4cce5); box-shadow: inset 0 0 0 1px #e6f1fb; display: flex; justify-content: center; padding-top: 1px; }
.task.first { margin-left: 14px; }
.task.active { background: linear-gradient(90deg, #f5f9fc, #e2edf8 53px, #708399 53px 54px, #d5e4f2 55px); padding-right: 6px; }
.task svg { width: 40px; height: 36px; }
.tray { display: flex; color: #fff; font: 12px/17px var(--segoe); }
.lang { width: 18px; padding-top: 8px; color: #e9eff5; }
.tray > svg { margin-top: 8px; }
.clock { width: 87px; display: flex; flex-direction: column; align-items: center; padding-top: 4px; }
.peek { width: 15px; height: 39px; border: 1px solid #61758c; background: linear-gradient(135deg, #b6c8d9, #8099b4 50%, #a3b8cd); box-shadow: inset 0 0 0 1px #c6d6e5; }
</style>
